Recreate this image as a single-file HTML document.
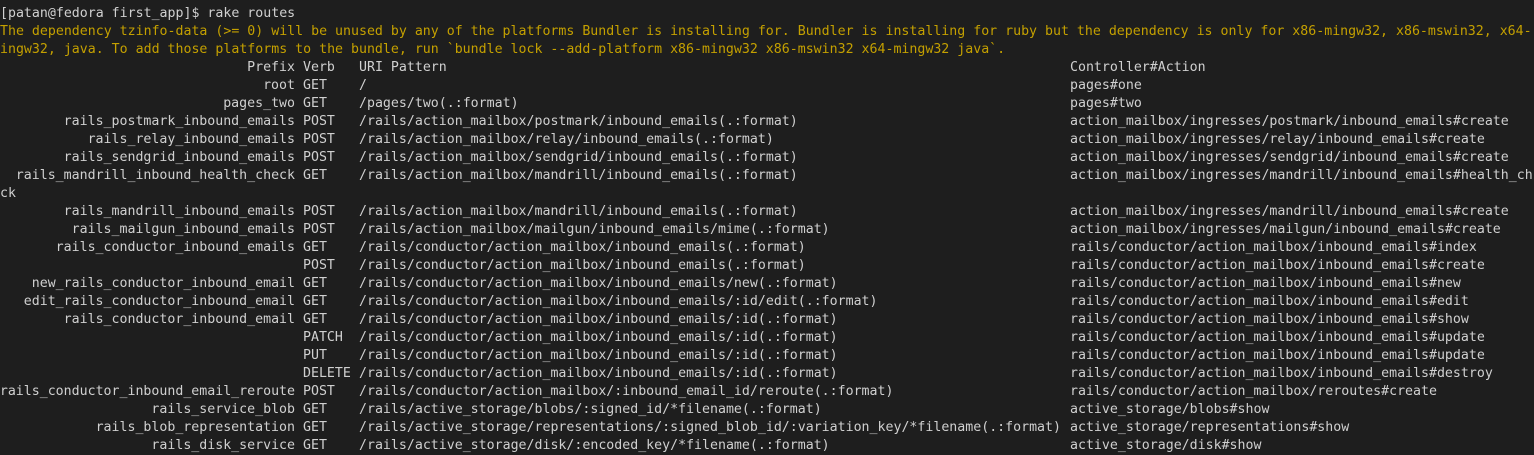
<!DOCTYPE html>
<html><head><meta charset="utf-8"><style>
html,body{margin:0;padding:0;background:#1e1e1e;width:1534px;height:454px;overflow:hidden}
#t{position:absolute;top:5px;left:0;width:1534px;font-family:"DejaVu Sans Mono","Liberation Mono",monospace;font-size:13.25px;line-height:18px;color:#d0d0d0}
.r{position:relative;height:18px;white-space:pre}
.r span{position:absolute;top:0}
.p{right:1239px}
.v{left:303px}
.u{left:359px}
.c{left:1070px}
.y{color:#c4a000}
</style></head><body><div id="t"><div class="r">[patan@fedora first_app]$ rake routes</div><div class="r y">The dependency tzinfo-data (&gt;= 0) will be unused by any of the platforms Bundler is installing for. Bundler is installing for ruby but the dependency is only for x86-mingw32, x86-mswin32, x64-</div><div class="r y">ingw32, java. To add those platforms to the bundle, run `bundle lock --add-platform x86-mingw32 x86-mswin32 x64-mingw32 java`.</div><div class="r"><span class="p">Prefix</span><span class="v">Verb</span><span class="u">URI Pattern</span><span class="c">Controller#Action</span></div><div class="r"><span class="p">root</span><span class="v">GET</span><span class="u">/</span><span class="c">pages#one</span></div><div class="r"><span class="p">pages_two</span><span class="v">GET</span><span class="u">/pages/two(.:format)</span><span class="c">pages#two</span></div><div class="r"><span class="p">rails_postmark_inbound_emails</span><span class="v">POST</span><span class="u">/rails/action_mailbox/postmark/inbound_emails(.:format)</span><span class="c">action_mailbox/ingresses/postmark/inbound_emails#create</span></div><div class="r"><span class="p">rails_relay_inbound_emails</span><span class="v">POST</span><span class="u">/rails/action_mailbox/relay/inbound_emails(.:format)</span><span class="c">action_mailbox/ingresses/relay/inbound_emails#create</span></div><div class="r"><span class="p">rails_sendgrid_inbound_emails</span><span class="v">POST</span><span class="u">/rails/action_mailbox/sendgrid/inbound_emails(.:format)</span><span class="c">action_mailbox/ingresses/sendgrid/inbound_emails#create</span></div><div class="r"><span class="p">rails_mandrill_inbound_health_check</span><span class="v">GET</span><span class="u">/rails/action_mailbox/mandrill/inbound_emails(.:format)</span><span class="c">action_mailbox/ingresses/mandrill/inbound_emails#health_ch</span></div><div class="r">ck</div><div class="r"><span class="p">rails_mandrill_inbound_emails</span><span class="v">POST</span><span class="u">/rails/action_mailbox/mandrill/inbound_emails(.:format)</span><span class="c">action_mailbox/ingresses/mandrill/inbound_emails#create</span></div><div class="r"><span class="p">rails_mailgun_inbound_emails</span><span class="v">POST</span><span class="u">/rails/action_mailbox/mailgun/inbound_emails/mime(.:format)</span><span class="c">action_mailbox/ingresses/mailgun/inbound_emails#create</span></div><div class="r"><span class="p">rails_conductor_inbound_emails</span><span class="v">GET</span><span class="u">/rails/conductor/action_mailbox/inbound_emails(.:format)</span><span class="c">rails/conductor/action_mailbox/inbound_emails#index</span></div><div class="r"><span class="v">POST</span><span class="u">/rails/conductor/action_mailbox/inbound_emails(.:format)</span><span class="c">rails/conductor/action_mailbox/inbound_emails#create</span></div><div class="r"><span class="p">new_rails_conductor_inbound_email</span><span class="v">GET</span><span class="u">/rails/conductor/action_mailbox/inbound_emails/new(.:format)</span><span class="c">rails/conductor/action_mailbox/inbound_emails#new</span></div><div class="r"><span class="p">edit_rails_conductor_inbound_email</span><span class="v">GET</span><span class="u">/rails/conductor/action_mailbox/inbound_emails/:id/edit(.:format)</span><span class="c">rails/conductor/action_mailbox/inbound_emails#edit</span></div><div class="r"><span class="p">rails_conductor_inbound_email</span><span class="v">GET</span><span class="u">/rails/conductor/action_mailbox/inbound_emails/:id(.:format)</span><span class="c">rails/conductor/action_mailbox/inbound_emails#show</span></div><div class="r"><span class="v">PATCH</span><span class="u">/rails/conductor/action_mailbox/inbound_emails/:id(.:format)</span><span class="c">rails/conductor/action_mailbox/inbound_emails#update</span></div><div class="r"><span class="v">PUT</span><span class="u">/rails/conductor/action_mailbox/inbound_emails/:id(.:format)</span><span class="c">rails/conductor/action_mailbox/inbound_emails#update</span></div><div class="r"><span class="v">DELETE</span><span class="u">/rails/conductor/action_mailbox/inbound_emails/:id(.:format)</span><span class="c">rails/conductor/action_mailbox/inbound_emails#destroy</span></div><div class="r"><span class="p">rails_conductor_inbound_email_reroute</span><span class="v">POST</span><span class="u">/rails/conductor/action_mailbox/:inbound_email_id/reroute(.:format)</span><span class="c">rails/conductor/action_mailbox/reroutes#create</span></div><div class="r"><span class="p">rails_service_blob</span><span class="v">GET</span><span class="u">/rails/active_storage/blobs/:signed_id/*filename(.:format)</span><span class="c">active_storage/blobs#show</span></div><div class="r"><span class="p">rails_blob_representation</span><span class="v">GET</span><span class="u">/rails/active_storage/representations/:signed_blob_id/:variation_key/*filename(.:format)</span><span class="c">active_storage/representations#show</span></div><div class="r"><span class="p">rails_disk_service</span><span class="v">GET</span><span class="u">/rails/active_storage/disk/:encoded_key/*filename(.:format)</span><span class="c">active_storage/disk#show</span></div></div></body></html>
